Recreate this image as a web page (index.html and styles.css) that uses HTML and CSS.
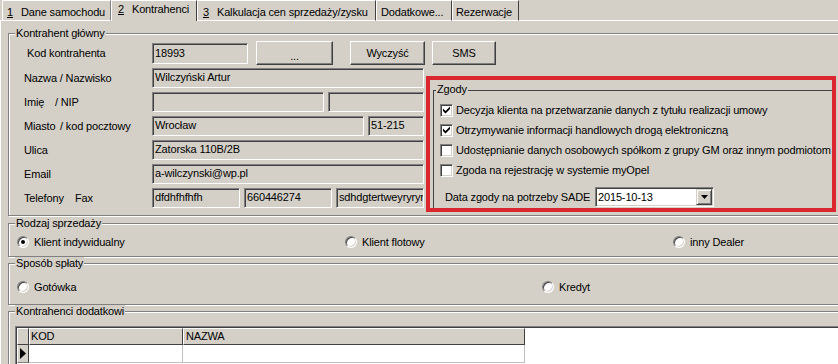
FILE: index.html
```html
<!DOCTYPE html>
<html lang="pl">
<head>
<meta charset="utf-8">
<title>Kontrahenci</title>
<link rel="stylesheet" href="styles.css">
</head>
<body>
<div class="tabstrip">
  <div class="tab-lead"></div>
  <div class="tab t1"><span class="acc">1</span>Dane samochodu</div>
  <div class="tab sel t2"><span class="acc">2</span>Kontrahenci</div>
  <div class="tab t3"><span class="acc">3</span>Kalkulacja cen sprzedaży/zysku</div>
  <div class="tab t4">Dodatkowe...</div>
  <div class="tab t5">Rezerwacje</div>
  <div class="tab-fill"></div>
</div>

<div class="page">
  <div class="group g-main">
    <span class="legend">Kontrahent główny</span>
    <div class="row row1">
      <span class="lbl lbl-kod">Kod kontrahenta</span>
      <div class="field f-kod">18993</div>
      <button class="btn b-dots">...</button>
      <button class="btn b-clear">Wyczyść</button>
      <button class="btn b-sms">SMS</button>
    </div>
    <div class="row">
      <span class="lbl">Nazwa / Nazwisko</span>
      <div class="field w272">Wilczyński Artur</div>
    </div>
    <div class="row">
      <span class="lbl"><span class="lbl-a">Imię</span>/ NIP</span>
      <div class="field w172"></div>
      <div class="field w96 gap4"></div>
    </div>
    <div class="row">
      <span class="lbl"><span class="lbl-m">Miasto</span>/ kod pocztowy</span>
      <div class="field w212">Wrocław</div>
      <div class="field w56 gap4">51-215</div>
    </div>
    <div class="row">
      <span class="lbl">Ulica</span>
      <div class="field w272">Zatorska 110B/2B</div>
    </div>
    <div class="row">
      <span class="lbl">Email</span>
      <div class="field w272">a-wilczynski@wp.pl</div>
    </div>
    <div class="row">
      <span class="lbl"><span class="lbl-t">Telefony</span>Fax</span>
      <div class="field w88">dfdhfhfhfh</div>
      <div class="field w88 gap4">660446274</div>
      <div class="field w88 gap4">sdhdgtertweyryryr,</div>
    </div>
  </div>

  <div class="group g-sale">
    <span class="legend">Rodzaj sprzedaży</span>
    <div class="radios r3">
      <label class="opt"><span class="radio on"></span>Klient indywidualny</label>
      <label class="opt"><span class="radio"></span>Klient flotowy</label>
      <label class="opt"><span class="radio"></span>inny Dealer</label>
    </div>
  </div>

  <div class="group g-pay">
    <span class="legend">Sposób spłaty</span>
    <div class="radios r2">
      <label class="opt"><span class="radio"></span>Gotówka</label>
      <label class="opt"><span class="radio"></span>Kredyt</label>
    </div>
  </div>

  <div class="group g-extra">
    <span class="legend">Kontrahenci dodatkowi</span>
    <div class="dgrid">
      <div class="drow dhead">
        <div class="hc hc-ind"></div>
        <div class="hc hc-kod">KOD</div>
        <div class="hc hc-naz">NAZWA</div>
      </div>
      <div class="drow">
        <div class="ind"><svg width="6" height="11" viewBox="0 0 6 11"><polygon points="0,0 6,5.5 0,11" fill="#000"/></svg></div>
        <div class="dc"></div>
        <div class="dc"></div>
      </div>
    </div>
  </div>
</div>

<div class="consent">
  <div class="zg">
    <span class="legend zg-legend">Zgody</span>
    <div class="chk-list">
      <div class="chk-row"><span class="chk"><svg width="7" height="8" viewBox="0 0 7 8"><polygon points="0,2.5 2.5,5 7,0.5 7,3 2.5,7.5 0,5" fill="#000"/></svg></span>Decyzja klienta na przetwarzanie danych z tytułu realizacji umowy</div>
      <div class="chk-row"><span class="chk"><svg width="7" height="8" viewBox="0 0 7 8"><polygon points="0,2.5 2.5,5 7,0.5 7,3 2.5,7.5 0,5" fill="#000"/></svg></span>Otrzymywanie informacji handlowych drogą elektroniczną</div>
      <div class="chk-row"><span class="chk"></span>Udostępnianie danych osobowych spółkom z grupy GM oraz innym podmiotom</div>
      <div class="chk-row"><span class="chk"></span>Zgoda na rejestrację w systemie myOpel</div>
    </div>
    <div class="date-row">
      <span class="date-lbl">Data zgody na potrzeby SADE</span>
      <div class="combo">
        <span class="combo-val">2015-10-13</span>
        <span class="combo-btn"><svg width="7" height="4" viewBox="0 0 7 4"><polygon points="0,0 7,0 3.5,4" fill="#000"/></svg></span>
      </div>
    </div>
  </div>
</div>
</body>
</html>
```

FILE: styles.css
```css
* { box-sizing: border-box; }

body {
  margin: 0;
  width: 838px;
  height: 364px;
  overflow: hidden;
  position: relative;
  background: #d4d0c8;
  font-family: "Liberation Sans", Arial, sans-serif;
  font-size: 11px;
  letter-spacing: -0.15px;
  color: #000;
}

/* ---------- tabs ---------- */
.tabstrip {
  display: flex;
  height: 21px;
}
.tab-lead {
  width: 2px;
  height: 21px;
  border-bottom: 1px solid #fff;
}
.tab {
  flex: none;
  height: 21px;
  border: 1px solid #fff;
  border-right-color: #404040;
  padding-top: 5px;
  line-height: 12px;
  white-space: nowrap;
}
.tab.sel {
  border-bottom: none;
  padding-top: 2px;
}
.tab-fill {
  flex: 1;
  height: 21px;
  border-bottom: 1px solid #fff;
}
.t1 { width: 109px; padding-left: 4px; border-right-color: #808080; }
.t2 { width: 86px; padding-left: 6px; }
.t3 { width: 179px; padding-left: 5px; }
.t4 { width: 76px; padding-left: 4px; }
.t5 { width: 67px; padding-left: 3px; }
.acc {
  text-decoration: underline;
  margin-right: 8px;
}

/* ---------- page & groups ---------- */
.page {
  border-left: 1px solid #fff;
  height: 343px;
  padding-top: 12px;
}
.group {
  border: 1px solid #808080;
  box-shadow: inset 1px 1px 0 #fff, 1px 1px 0 #fff;
  margin-left: 7px;
  margin-right: -20px;
}
.legend {
  display: block;
  width: max-content;
  height: 13px;
  line-height: 13px;
  margin: -7px 0 0 6px;
  padding: 0 1px;
  background: #d4d0c8;
}

.g-main { padding-bottom: 5px; }
.g-sale { margin-top: 7px; padding-bottom: 2px; }
.g-pay { margin-top: 6px; }
.g-extra { margin-top: 6px; height: 80px; }

/* ---------- form rows ---------- */
.row {
  display: flex;
  align-items: center;
  height: 24px;
  padding-left: 15px;
}
.row1 {
  height: 25px;
  margin-top: 1px;
  align-items: flex-start;
}
.lbl {
  flex: none;
  width: 128px;
  white-space: nowrap;
}
.row1 .lbl { line-height: 25px; }
.lbl-kod { padding-left: 3px; }
.lbl-a { display: inline-block; width: 31px; }
.lbl-m { display: inline-block; width: 36px; }
.lbl-t { display: inline-block; width: 51px; }

.field {
  flex: none;
  height: 20px;
  line-height: 17px;
  padding-left: 2px;
  white-space: nowrap;
  overflow: hidden;
  border: 1px solid;
  border-color: #808080 #fff #fff #808080;
  box-shadow: inset 1px 1px 0 #404040;
}
.f-kod { width: 96px; height: 21px; margin-top: 2px; line-height: 18px; }
.w272 { width: 272px; }
.w212 { width: 212px; }
.w172 { width: 172px; }
.w96 { width: 96px; }
.w88 { width: 88px; }
.w56 { width: 56px; }
.gap4 { margin-left: 4px; }

.btn {
  flex: none;
  height: 24px;
  padding: 0;
  font: inherit;
  letter-spacing: inherit;
  color: #000;
  background: #d4d0c8;
  border: 1px solid;
  border-color: #fff #404040 #404040 #fff;
  box-shadow: inset -1px -1px 0 #808080;
}
.b-dots { width: 77px; margin-left: 8px; padding-top: 6px; }
.b-clear { width: 75px; margin-left: 17px; }
.b-sms { width: 64px; margin-left: 7px; }

/* ---------- radios ---------- */
.radios {
  display: grid;
  align-items: center;
  padding-left: 8px;
}
.r3 { grid-template-columns: 328px 328px 1fr; height: 24px; }
.r2 { grid-template-columns: 525px 1fr; height: 34px; }
.opt {
  display: flex;
  align-items: center;
  white-space: nowrap;
}
.radio {
  flex: none;
  width: 12px;
  height: 12px;
  margin-right: 5px;
  border-radius: 50%;
  border: 1px solid;
  border-color: #808080 #fff #fff #808080;
  box-shadow: inset 1px 1px 0 #404040, inset -1px -1px 0 #d4d0c8;
  background: #fff;
  display: flex;
  align-items: center;
  justify-content: center;
}
.radio.on::after {
  content: "";
  width: 4px;
  height: 4px;
  border-radius: 50%;
  background: #000;
}

/* ---------- data grid ---------- */
.dgrid {
  margin: 9px -30px 0 7px;
  height: 60px;
  background: #fff;
  border-top: 1px solid #404040;
  border-left: 1px solid #404040;
  box-shadow: -1px -1px 0 #808080;
}
.drow {
  display: grid;
  grid-template-columns: 12px 154px 342px;
  height: 18px;
}
.dhead { height: 17px; }
.hc {
  background: #d4d0c8;
  border-left: 1px solid #fff;
  border-top: 1px solid #fff;
  border-right: 1px solid #404040;
  border-bottom: 1px solid #404040;
  line-height: 14px;
  padding-left: 1px;
  white-space: nowrap;
}
.hc-naz { padding-left: 2px; }
.ind {
  background: #d4d0c8;
  border-left: 1px solid #fff;
  border-right: 1px solid #404040;
  border-bottom: 1px solid #808080;
  display: flex;
  align-items: center;
  padding-left: 2px;
}
.dc {
  border-right: 1px solid #c0c0c0;
  border-bottom: 1px solid #c0c0c0;
}

/* ---------- consent overlay (red annotation box) ---------- */
.consent {
  position: absolute;
  left: 426px;
  top: 76px;
  width: 410px;
  height: 136px;
  border: 4px solid #d9262f;
  background: #d4d0c8;
  padding: 10px 0 0 3px;
  overflow: hidden;
}
.zg {
  border-top: 1px solid #404040;
  border-left: 1px solid #404040;
  margin-right: -10px;
  height: 200px;
}
.zg-legend {
  margin: -8px 0 0 2px;
}
.chk-list { padding-top: 4px; }
.chk-row {
  display: flex;
  align-items: center;
  height: 20px;
  padding-left: 6px;
  white-space: nowrap;
}
.chk {
  flex: none;
  width: 13px;
  height: 13px;
  margin-right: 3px;
  border: 1px solid;
  border-color: #808080 #fff #fff #808080;
  box-shadow: inset 1px 1px 0 #404040, inset -1px -1px 0 #d4d0c8;
  background: #fff;
  display: flex;
  align-items: center;
  justify-content: center;
}
.date-row {
  display: flex;
  align-items: center;
  height: 20px;
  margin-top: 7px;
  padding-left: 11px;
}
.date-lbl {
  flex: none;
  width: 150px;
  white-space: nowrap;
}
.combo {
  display: flex;
  align-items: center;
  width: 119px;
  height: 20px;
  background: #fff;
  border: 1px solid;
  border-color: #808080 #fff #fff #808080;
  box-shadow: inset 1px 1px 0 #404040, inset -1px -1px 0 #d4d0c8;
  padding: 1px 1px 1px 2px;
}
.combo-val { flex: 1; }
.combo-btn {
  flex: none;
  width: 16px;
  height: 16px;
  background: #d4d0c8;
  border: 1px solid;
  border-color: #d4d0c8 #404040 #404040 #d4d0c8;
  box-shadow: inset 1px 1px 0 #fff, inset -1px -1px 0 #808080;
  display: flex;
  align-items: center;
  justify-content: center;
}
```
